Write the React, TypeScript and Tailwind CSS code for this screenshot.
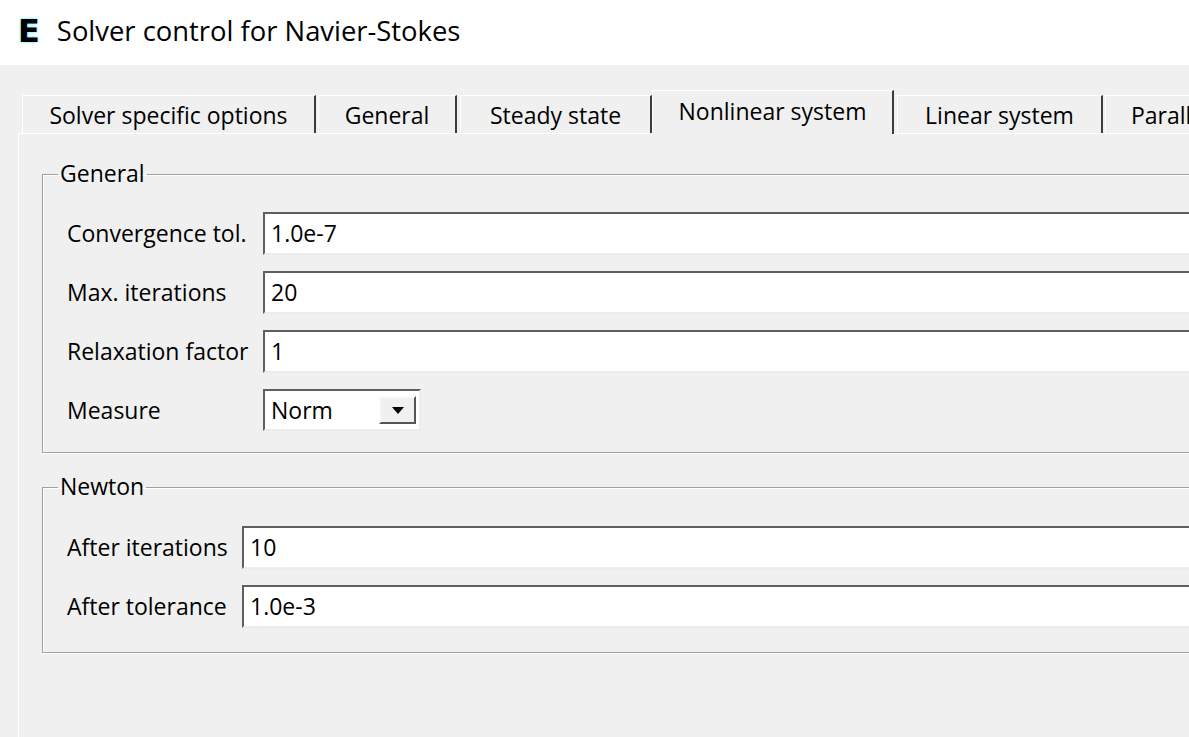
import clsx from "clsx";

type Tab = {
  name: string;
  width: string;
  gap: string;
  selected?: boolean;
};

const tabs: Tab[] = [
  { name: "Solver specific options", width: "w-[294px]", gap: "ml-[4px]" },
  { name: "General", width: "w-[139px]", gap: "ml-[2px]" },
  { name: "Steady state", width: "w-[192px]", gap: "ml-[3px]" },
  { name: "Nonlinear system", width: "w-[242px]", gap: "ml-0", selected: true },
  { name: "Linear system", width: "w-[206px]", gap: "ml-[3px]" },
];

const TextField = ({
  label,
  value,
  labelWidth,
}: {
  label: string;
  value: string;
  labelWidth: string;
}) => (
  <div className="flex items-center h-[43px]">
    <span className={clsx("shrink-0", labelWidth)}>{label}</span>
    <div className="flex-1 h-full bg-white border-t-2 border-l-2 border-[#5f5f5f] border-b-2 border-b-[#ececec] flex items-center pl-[6px]">
      {value}
    </div>
  </div>
);

const GroupBox = ({
  title,
  className,
  children,
}: {
  title: string;
  className?: string;
  children: React.ReactNode;
}) => (
  <fieldset
    className={clsx(
      "border border-[#a0a0a0] shadow-[inset_1px_1px_0_#fff,1px_1px_0_#fff] ml-[23px] px-0 m-0",
      className
    )}
  >
    <legend className="ml-[15px] px-[2px] h-[24px] leading-[22px]">{title}</legend>
    <div className="pl-[24px] flex flex-col gap-[16px]">{children}</div>
  </fieldset>
);

const App = () => {
  return (
    <div className="w-[1189px] h-[737px] overflow-hidden bg-[#f0f0f0] text-black font-['Open_Sans',sans-serif] text-[23px]">
      <header className="h-[65px] bg-white flex items-center pl-[18px] pb-[4px]">
        <span className="font-['DejaVu_Sans',sans-serif] font-bold text-[32px] leading-none [text-shadow:0_0_3px_#3ee0f0]">
          E
        </span>
        <span className="ml-[17px] text-[27.4px] leading-none">Solver control for Navier-Stokes</span>
      </header>

      <div className="pt-[25px] pl-[18px]">
        <div className="flex items-end h-[43px] relative z-10">
          {tabs.map((tab) => (
            <div
              key={tab.name}
              className={clsx(
                "shrink-0 flex items-center justify-center whitespace-nowrap",
                tab.width,
                tab.gap,
                tab.selected
                  ? "h-[44px] -mb-px bg-[#f0f0f0] border-t border-l border-white border-r-2 border-r-[#3c3c3c] pb-[3px]"
                  : "h-[38px] border-t border-l border-white border-r-2 border-r-[#3c3c3c] pt-[1px]"
              )}
            >
              {tab.name}
            </div>
          ))}
          <div className="shrink-0 ml-[2px] w-[120px] h-[38px] border-t border-l border-white flex items-center pl-[25px] pt-[1px] whitespace-nowrap overflow-hidden">
            Parall
          </div>
        </div>

        <div className="w-[1230px] h-[620px] border-t border-l border-white pt-[28px]">
          <GroupBox title="General" className="pt-[26px] pb-[21px]">
            <TextField label="Convergence tol." value="1.0e-7" labelWidth="w-[196px]" />
            <TextField label="Max. iterations" value="20" labelWidth="w-[196px]" />
            <TextField label="Relaxation factor" value="1" labelWidth="w-[196px]" />
            <div className="flex items-center h-[42px]">
              <span className="w-[196px] shrink-0">Measure</span>
              <div className="w-[158px] h-full bg-white border-t-2 border-l-2 border-[#5f5f5f] border-b-2 border-r-2 border-b-[#ececec] border-r-[#ececec] flex items-center pl-[6px] pr-[3px]">
                <span className="flex-1">Norm</span>
                <div className="w-[37px] h-[28px] bg-[#f0f0f0] border-t-2 border-l-2 border-[#fafafa] border-b-2 border-r-2 border-b-[#555] border-r-[#555] flex items-center justify-center">
                  <svg width="12" height="7" viewBox="0 0 12 7">
                    <path d="M0 0 L12 0 L6 7 Z" fill="#000" />
                  </svg>
                </div>
              </div>
            </div>
          </GroupBox>

          <GroupBox title="Newton" className="mt-[22px] pt-[27px] pb-[24px]">
            <TextField label="After iterations" value="10" labelWidth="w-[175px]" />
            <TextField label="After tolerance" value="1.0e-3" labelWidth="w-[175px]" />
          </GroupBox>
        </div>
      </div>
    </div>
  );
};

export default App;
